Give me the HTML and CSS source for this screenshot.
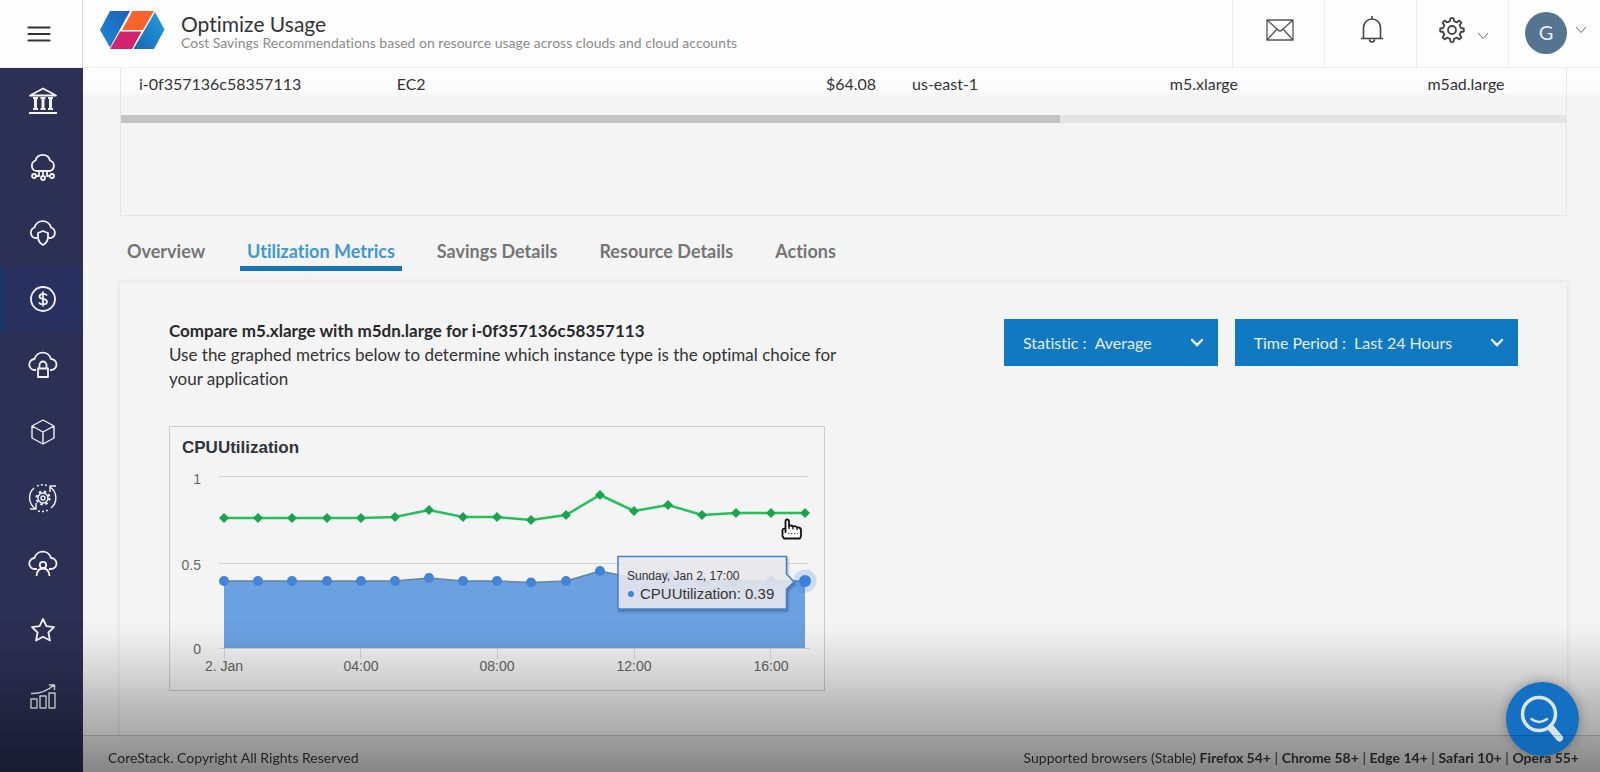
FILE: index.html
```html
<!DOCTYPE html>
<html lang="en">
<head>
  <meta charset="UTF-8" />
  <meta name="viewport" content="width=device-width, initial-scale=1.0" />
  <title>Optimize Usage</title>
  <link rel="stylesheet" href="styles.css">
</head>
<body>
  <header class="topbar">
    <button type="button" class="menu-btn" aria-label="Menu">
      <svg width="24" height="16" viewBox="0 0 24 16"><path d="M1.500 1.500h21M1.500 8h21M1.500 14.500h21" stroke="#333" stroke-width="2.200" stroke-linecap="round"/></svg>
    </button>
    <svg class="logo" width="66" height="40" viewBox="0 0 66 40">
      <defs>
        <linearGradient id="logoLeft" x1="0" y1="1" x2="1" y2="0"><stop offset="0" stop-color="#1d8ad8"/><stop offset="1" stop-color="#1d5fb8"/></linearGradient>
        <linearGradient id="logoRight" x1="1" y1="0" x2="0" y2="1"><stop offset="0" stop-color="#22a3d8"/><stop offset="1" stop-color="#1763b9"/></linearGradient>
      </defs>
      <path d="M11 1H31L11 37.500L1 20Z" fill="url(#logoLeft)"/>
      <path d="M33.500 1H55L44 20H23Z" fill="#f9642d"/>
      <path d="M21 21.500H42.500L33 39H11Z" fill="#d3246f"/>
      <path d="M56 2L65.500 19.500L55 39H34.500Z" fill="url(#logoRight)"/>
    </svg>
    <div class="page-title">
      <h1>Optimize Usage</h1>
      <p>Cost Savings Recommendations based on resource usage across clouds and cloud accounts</p>
    </div>
    <div class="top-actions">
      <button type="button" aria-label="Messages">
        <svg width="28" height="22" viewBox="0 0 28 22" fill="none" stroke="#555" stroke-width="1.300"><path d="M1 1H27V21H1ZM1 1L11 10Q14 14 17 10L27 1M1 21L11 10M27 21L17 10"/></svg>
      </button>
      <button type="button" aria-label="Notifications">
        <svg width="24" height="28" viewBox="0 0 24 28" fill="none" stroke="#444" stroke-width="1.600"><path d="M1 22.500H23M3.500 22V11.500A8.500 8.500 0 0 1 20.500 11.500V22M12 0V3M9.500 23.500A2.500 2.500 0 0 0 14.500 23.500"/></svg>
      </button>
      <button type="button" aria-label="Settings">
        <svg width="26" height="26" viewBox="-13 -13 26 26" fill="none" stroke="#444" stroke-width="1.800" stroke-linejoin="round"><path d="M-2-8.800L-1.500-11.800H1.500L2-8.800L4.800-7.600L7.300-9.400L9.400-7.300L7.600-4.800L8.800-2L11.800-1.500V1.500L8.800 2L7.600 4.800L9.400 7.300L7.300 9.400L4.800 7.600L2 8.800L1.500 11.800H-1.500L-2 8.800L-4.800 7.600L-7.300 9.400L-9.400 7.300L-7.600 4.800L-8.800 2L-11.800 1.500V-1.500L-8.800-2L-7.600-4.800L-9.400-7.300L-7.300-9.400L-4.800-7.600Z"/><circle r="4"/></svg>
        <svg class="caret low" width="12" height="8" viewBox="0 0 12 8"><path d="M1 1L6 6.500L11 1" fill="none" stroke="#666"/></svg>
      </button>
      <button type="button" aria-label="Account">
        <span class="avatar">G</span>
        <svg class="caret" width="12" height="8" viewBox="0 0 12 8"><path d="M1 1L6 6.500L11 1" fill="none" stroke="#666"/></svg>
      </button>
    </div>
  </header>

  <nav class="sidebar">
    <a href="#" aria-label="Governance">
      <svg viewBox="0 0 30 30"><path d="M2 9.500L15 2.500L28 9.500Z"/><path d="M1 27H29M5 12H10M12.500 12H17.500M20 12H25M5 23H10M12.500 23H17.500M20 23H25"/><path d="M7.500 12V23M15 12V23M22.500 12V23" stroke-width="3"/></svg>
    </a>
    <a href="#" aria-label="Cloud operations">
      <svg viewBox="0 0 30 30"><path d="M8 19A5.500 5.500 0 0 1 7.500 8.500A7.500 7.500 0 0 1 22 8.500A5.500 5.500 0 0 1 22 19ZM11 19V24H8M19 19V24H22M15 19V25"/><circle cx="6" cy="24" r="2"/><circle cx="24" cy="24" r="2"/><circle cx="15" cy="26" r="2"/></svg>
    </a>
    <a href="#" aria-label="Security">
      <svg viewBox="0 0 30 30"><path d="M9 20H7A5.500 5.500 0 0 1 6.500 9.500A8.500 8.500 0 0 1 23 9.500A5.500 5.500 0 0 1 23 20H21M15 13L20 15V20Q19 25 15 27Q11 25 10 20V15Z"/></svg>
    </a>
    <a href="#" class="active" aria-label="Cost">
      <svg viewBox="0 0 30 30"><circle cx="15" cy="15" r="12"/><path d="M19 11.500Q18 9.800 15 9.800Q11.500 9.800 11.500 12.400Q11.500 14.300 15 14.800Q19 15.400 19 17.700Q19 20.300 15 20.300Q12 20.300 11 18.300M15 7.500V22.500"/></svg>
    </a>
    <a href="#" aria-label="Access">
      <svg viewBox="0 0 30 30"><path d="M8 20H7A5.500 5.500 0 0 1 6.500 9A8.500 8.500 0 0 1 23 9A5.500 5.500 0 0 1 23 20H22M10 18.500H20V27H10ZM11.500 18V15A3.500 3.500 0 0 1 18.500 15V18"/></svg>
    </a>
    <a href="#" aria-label="Resources">
      <svg viewBox="0 0 30 30" class="thin"><path d="M15 3L26 9V21L15 27L4 21V9ZM4 9L15 15L26 9M15 15V27"/></svg>
    </a>
    <a href="#" aria-label="Automation">
      <svg viewBox="0 0 30 30" class="thin"><path d="M8 26A13 13 0 0 1 6 5M22 4A13 13 0 0 1 23 25M22 9V3H28M2 26H8V20"/><path d="M9 3A13 13 0 0 1 20 3M10 28A13 13 0 0 0 20 27" stroke-dasharray="2 2"/><circle cx="15" cy="15" r="5"/><circle cx="15" cy="15" r="6.500" stroke-dasharray="2.500 2.600" stroke-width="2"/><circle cx="15" cy="15" r="2"/></svg>
    </a>
    <a href="#" aria-label="Accounts">
      <svg viewBox="0 0 30 30"><path d="M9 20H7A5.500 5.500 0 0 1 6.500 9A8.500 8.500 0 0 1 23 9A5.500 5.500 0 0 1 23 20H21M8.500 27Q9 19.500 15 19.500Q21 19.500 21.500 27"/><circle cx="15" cy="16" r="3.200"/></svg>
    </a>
    <a href="#" aria-label="Favorites">
      <svg viewBox="0 0 30 30"><path d="M15 4L18.400 11.200L26 12.200L20.400 17.500L22 25.500L15 21.700L8 25.500L9.600 17.500L4 12.200L11.600 11.200Z"/></svg>
    </a>
    <a href="#" aria-label="Reports">
      <svg viewBox="0 0 30 30" class="thin"><path d="M3 18H9V27H3ZM12 15H18V27H12ZM21 12H27V27H21ZM3 12.500Q16 13 26 4M21 4H26.500V9"/></svg>
    </a>
  </nav>

  <main>
    <section class="table-box">
      <table>
        <tbody>
          <tr>
            <td>i-0f357136c58357113</td>
            <td>EC2</td>
            <td class="amount">$64.08</td>
            <td>us-east-1</td>
            <td>m5.xlarge</td>
            <td>m5ad.large</td>
          </tr>
        </tbody>
      </table>
      <div class="scroll-track"><div class="scroll-thumb"></div></div>
    </section>

    <nav class="tabs">
      <a href="#">Overview</a>
      <a href="#" class="active">Utilization Metrics</a>
      <a href="#">Savings Details</a>
      <a href="#">Resource Details</a>
      <a href="#">Actions</a>
    </nav>

    <section class="panel">
      <div class="panel-head">
        <div class="intro">
          <h2>Compare m5.xlarge with m5dn.large for i-0f357136c58357113</h2>
          <p>Use the graphed metrics below to determine which instance type is the optimal choice for your application</p>
        </div>
        <div class="filters">
          <div class="filter">
            <label for="statistic">Statistic :</label>
            <select id="statistic" class="statistic">
              <option>Average</option>
              <option>Maximum</option>
            </select>
            <svg width="14" height="10" viewBox="0 0 14 10"><path d="M2 2L7 7L12 2" fill="none" stroke="#fff" stroke-width="2.400" stroke-linecap="round"/></svg>
          </div>
          <div class="filter">
            <label for="period">Time Period :</label>
            <select id="period" class="period">
              <option>Last 24 Hours</option>
              <option>Last 7 Days</option>
            </select>
            <svg width="14" height="10" viewBox="0 0 14 10"><path d="M2 2L7 7L12 2" fill="none" stroke="#fff" stroke-width="2.400" stroke-linecap="round"/></svg>
          </div>
        </div>
      </div>

      <figure class="chart">
        <svg viewBox="0 0 654 263" width="654" height="263">
          <defs>
            <path id="dia" d="M0-5L5 0L0 5L-5 0Z"/>
            <circle id="dot" r="5"/>
          </defs>
          <text class="chart-title" x="12" y="26">CPUUtilization</text>
          <path class="grid" d="M49 49.500H637M49 136.500H637M49 221.500H640M54.500 222V232M190.500 222V232M327.500 222V232M464.500 222V232M600.500 222V232"/>
          <g class="axis" text-anchor="end">
            <text x="31" y="57">1</text>
            <text x="31" y="143">0.5</text>
            <text x="31" y="227">0</text>
          </g>
          <g class="axis" text-anchor="middle">
            <text x="54" y="244">2. Jan</text>
            <text x="191" y="244">04:00</text>
            <text x="327" y="244">08:00</text>
            <text x="464" y="244">12:00</text>
            <text x="601" y="244">16:00</text>
          </g>

          <!-- current instance -->
          <path d="M54 154H225L259 151L293 154H327L361 155.500L396 154L430 144L464 151L498 148L532 154H635V221H54Z" fill="#6ba1e1"/>
          <path d="M54 154H225L259 151L293 154H327L361 155.500L396 154L430 144L464 151L498 148L532 154H635" fill="none" stroke="#66829d" stroke-width="1.500"/>
          <g fill="#4484d6">
            <use href="#dot" x="54" y="154"/><use href="#dot" x="88" y="154"/><use href="#dot" x="122" y="154"/>
            <use href="#dot" x="157" y="154"/><use href="#dot" x="191" y="154"/><use href="#dot" x="225" y="154"/>
            <use href="#dot" x="259" y="151"/><use href="#dot" x="293" y="154"/><use href="#dot" x="327" y="154"/>
            <use href="#dot" x="361" y="155.500"/><use href="#dot" x="396" y="154"/><use href="#dot" x="430" y="144"/>
            <use href="#dot" x="464" y="151"/><use href="#dot" x="498" y="148"/><use href="#dot" x="532" y="154"/>
            <use href="#dot" x="566" y="154"/><use href="#dot" x="601" y="154"/>
            <circle cx="635" cy="154" r="11.500" fill-opacity=".22"/>
            <circle cx="635" cy="154" r="6" fill="#3b80e0"/>
          </g>

          <!-- recommended instance -->
          <path d="M54 91H191L225 90L259 83L293 90H327L361 93L396 88L430 68L464 84L498 78L532 88L566 86H635" fill="none" stroke="#24c05d" stroke-width="2.500"/>
          <g fill="#1ba450">
            <use href="#dia" x="54" y="91"/><use href="#dia" x="88" y="91"/><use href="#dia" x="122" y="91"/>
            <use href="#dia" x="157" y="91"/><use href="#dia" x="191" y="91"/><use href="#dia" x="225" y="90"/>
            <use href="#dia" x="259" y="83"/><use href="#dia" x="293" y="90"/><use href="#dia" x="327" y="90"/>
            <use href="#dia" x="361" y="93"/><use href="#dia" x="396" y="88"/><use href="#dia" x="430" y="68"/>
            <use href="#dia" x="464" y="84"/><use href="#dia" x="498" y="78"/><use href="#dia" x="532" y="88"/>
            <use href="#dia" x="566" y="86"/><use href="#dia" x="601" y="86"/><use href="#dia" x="635" y="86"/>
          </g>

          <g class="tip">
            <path class="tip-box" d="M448 129.500H616.500V147L624 155L616.500 162V182H448Z"/>
            <text class="tip-date" x="457" y="153">Sunday, Jan 2, 17:00</text>
            <circle cx="461" cy="167" r="3" fill="#4484d6"/>
            <text class="tip-value" x="470" y="172">CPUUtilization: 0.39</text>
          </g>

          <!-- pointer -->
          <g transform="translate(611 91)" stroke-linejoin="round">
            <path d="M4.500 14V3.500Q4.500 1.500 6 1.500Q8 1.500 8 3.500V8Q10 6.800 12 8.500Q14.500 7.300 16 9.500Q19.500 9 20 12V18L19 20.500H3L1.500 18V12Q2 10 4.500 11Z" fill="#fff" stroke="#111" stroke-width="1.800"/>
            <path d="M8 8V11M12 9V11.500M16 10V12" stroke="#111" stroke-width="1.300"/>
            <path d="M7 15.500H17" stroke="#555" stroke-dasharray="1.500 1.500"/>
          </g>
        </svg>
      </figure>
    </section>
  </main>

  <div class="shade"></div>
  <button type="button" class="help-btn" aria-label="Search help">
    <svg width="46" height="48" viewBox="0 0 46 48" fill="none" stroke="#d8e6ee" stroke-linecap="round"><circle cx="19" cy="19" r="16.500" stroke-width="3.500"/><path d="M11.500 24Q19 30 27 24" stroke-width="2.500"/><path d="M31 33L39.500 43" stroke-width="7"/></svg>
  </button>
  <footer>
    <span>CoreStack. Copyright All Rights Reserved</span>
    <span>Supported browsers (Stable) <b>Firefox 54+</b> | <b>Chrome 58+</b> | <b>Edge 14+</b> | <b>Safari 10+</b> | <b>Opera 55+</b></span>
  </footer>
</body>
</html>
```
FILE: styles.css
```css
* {
  box-sizing: border-box;
}
body {
  margin: 0;
  min-height: 100vh;
  display: grid;
  grid-template-columns: 83px minmax(0, 1fr);
  grid-template-rows: 68px 1fr 37px;
  font-family: Lato, "Open Sans", sans-serif;
  font-size: 16px;
  font-variant-ligatures: none;
  color: #333;
  background: #f4f4f5;
}
h1, h2, p, figure {
  margin: 0;
}
a {
  text-decoration: none;
}
button {
  font: inherit;
  border: 0;
  padding: 0;
  background: none;
  cursor: pointer;
}

/* header */
.topbar {
  grid-column: 1 / 3;
  display: flex;
  align-items: center;
  background: #fefefe;
  border-bottom: 1px solid #f1f1f3;
}
.menu-btn {
  width: 83px;
  height: 68px;
  padding: 4px 4px 0 0;
  border-right: 1px solid #ddd;
}
.logo {
  margin: 0 16px 8px 16px;
}
.page-title {
  flex: 1;
  padding-bottom: 4px;
}
.page-title h1 {
  font-size: 21px;
  line-height: 22px;
  font-weight: 400;
}
.page-title p {
  font-size: 14px;
  line-height: 16px;
  color: #8b8b8b;
}
.top-actions {
  display: flex;
  height: 68px;
}
.top-actions button {
  width: 92px;
  display: flex;
  align-items: center;
  justify-content: center;
  gap: 12px;
  padding: 0 0 8px 3px;
  border-left: 1px solid #ebebee;
}
.caret.low {
  margin-top: 12px;
}
.avatar {
  width: 42px;
  height: 42px;
  margin-top: 6px;
  margin-right: -4px;
  border-radius: 50%;
  background: #557490;
  color: #e8eef4;
  font-size: 20px;
  line-height: 40px;
}

/* sidebar */
.sidebar {
  grid-row: 2 / 4;
  display: flex;
  flex-direction: column;
  padding-bottom: 43px;
  background: #2d3055;
}
.sidebar a {
  flex: 1;
  display: flex;
  align-items: center;
  justify-content: center;
  border-left: 2px solid transparent;
}
.sidebar a.active {
  background: #293160;
  border-left-color: #0f3c70;
}
.sidebar svg {
  width: 30px;
  height: 30px;
  fill: none;
  stroke: #f4f4fa;
  stroke-width: 1.8;
  stroke-linejoin: round;
}
.sidebar svg.thin {
  stroke-width: 1.4;
}

/* content */
main {
  display: flex;
  flex-direction: column;
  padding: 0 33px 0 37px;
  background: linear-gradient(#fdfdfe 0, #fbfbfc 24px, #f4f4f5 28px);
}
.table-box {
  height: 148px;
  overflow: hidden;
  border: 1px solid #e6e6e8;
  border-top: 0;
}
table {
  width: 107%;
  table-layout: fixed;
  border-collapse: collapse;
}
td {
  height: 47px;
  padding: 0 18px 16px;
}
.amount {
  text-align: right;
}
.scroll-track {
  height: 8px;
  background: #e4e4e4;
}
.scroll-thumb {
  width: 65%;
  height: 8px;
  background: #c3c3c3;
}
.tabs {
  display: flex;
  gap: 28px;
  padding: 20px 0 11px;
}
.tabs a {
  padding: 5px 7px;
  font-size: 18px;
  line-height: 20px;
  font-weight: 700;
  color: #757575;
  border-bottom: 5px solid transparent;
}
.tabs a.active {
  color: #4198cf;
  border-bottom-color: #1675b5;
}
.panel {
  flex: 1;
  padding: 37px 49px 0;
  box-shadow: 0 0 5px rgba(0, 0, 0, 0.1);
}
.panel-head {
  display: flex;
  justify-content: space-between;
  align-items: flex-start;
}
.intro {
  max-width: 690px;
  font-size: 17px;
  line-height: 24px;
}
.intro h2 {
  font-size: 17px;
  line-height: 24px;
  color: #282828;
}
.filters {
  display: flex;
  gap: 17px;
}
.filter {
  position: relative;
  display: flex;
  align-items: center;
  height: 47px;
  padding-left: 19px;
  background: #1178c2;
  color: #e4f0f9;
}
.filter select {
  appearance: none;
  height: 47px;
  padding: 0 0 0 8px;
  border: 0;
  background: none;
  font: inherit;
  color: inherit;
}
.filter option {
  color: #333;
}
.filter svg {
  position: absolute;
  right: 14px;
  pointer-events: none;
}
.statistic {
  width: 131px;
}
.period {
  width: 172px;
}

/* chart */
.chart {
  width: 656px;
  margin-top: 35px;
  border: 1px solid #ccc;
}
.chart svg {
  display: block;
}
.chart text {
  font-family: "Liberation Sans", Arial, sans-serif;
}
.chart .chart-title {
  font-size: 17px;
  font-weight: 700;
  fill: #303438;
}
.grid {
  fill: none;
  stroke: #d5d5d5;
}
.axis {
  font-size: 14px;
  fill: #666;
}
.tip-box {
  fill: #f1f0f6;
  fill-opacity: 0.86;
  stroke: #4381cf;
  stroke-width: 1.5;
  filter: drop-shadow(1px 2px 1px rgba(0, 0, 0, 0.3));
}
.tip-date {
  font-size: 12px;
  fill: #333;
}
.tip-value {
  font-size: 15px;
  fill: #333;
}

/* dark fade along the bottom of the window */
.shade {
  position: fixed;
  left: 0;
  right: 0;
  bottom: 0;
  height: 152px;
  pointer-events: none;
  background: linear-gradient(rgba(0, 0, 0, 0), rgba(0, 0, 0, 0.03) 13%, rgba(0, 0, 0, 0.09) 26%, rgba(0, 0, 0, 0.15) 40%, rgba(0, 0, 0, 0.22) 53%, rgba(0, 0, 0, 0.29) 72%, rgba(0, 0, 0, 0.43));
}
.help-btn {
  position: fixed;
  right: 21px;
  bottom: 16px;
  width: 73px;
  height: 74px;
  border-radius: 50%;
  background: #1370c2;
  box-shadow: 0 0 12px rgba(0, 0, 0, 0.3);
}
.help-btn svg {
  display: block;
  margin: 0 auto;
}
footer {
  grid-column: 2;
  position: relative;
  display: flex;
  align-items: center;
  justify-content: space-between;
  padding: 6px 21px 0 25px;
  border-top: 1px solid rgba(0, 0, 0, 0.15);
  background: rgba(0, 0, 0, 0.04);
  font-size: 14px;
  color: #222;
}
```
